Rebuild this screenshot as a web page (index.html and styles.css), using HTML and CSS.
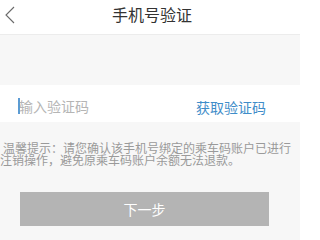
FILE: index.html
```html
<!DOCTYPE html>
<html lang="zh-CN">
<head>
<meta charset="utf-8">
<link rel="stylesheet" href="styles.css">
</head>
<body>
<div class="page">
  <header class="nav">
    <span class="back">
      <svg width="10" height="18" viewBox="0 0 10 18"><path d="M9 1 L1 9 L9 17" fill="none" stroke="#6a6a6a" stroke-width="1.1"/></svg>
    </span>
    <h1 class="title">手机号验证</h1>
    <span class="spacer"></span>
  </header>
  <div class="band"></div>
  <div class="input-row">
    <span class="field"><span class="cursor"></span><span class="placeholder">输入验证码</span></span>
    <span class="get-code">获取验证码</span>
  </div>
  <p class="hint">温馨提示：请您确认该手机号绑定的乘车码账户已进行注销操作，避免原乘车码账户余额无法退款。</p>
  <button class="next">下一步</button>
</div>
</body>
</html>
```
FILE: styles.css
```css
html, body {
  margin: 0;
  padding: 0;
  background: #ffffff;
}
body {
  font-family: "Noto Sans CJK SC", "Noto Sans", sans-serif;
}
.page {
  width: 300px;
  min-height: 240px;
  background: #f7f7f7;
  overflow: hidden;
}
.nav {
  height: 34px;
  background: #ffffff;
  border-bottom: 1px solid #ececec;
  display: flex;
  align-items: center;
  padding-right: 10px;
}
.back {
  width: 24px;
  display: flex;
  justify-content: flex-start;
  padding-left: 5px;
  box-sizing: border-box;
  margin-top: -4px;
}
.back svg { display: block; }
.title {
  flex: 1;
  margin: 0;
  text-align: center;
  font-size: 16px;
  font-weight: normal;
  color: #333333;
  margin-top: -6px;
  margin-right: -14px;
}
.spacer { width: 24px; }
.band {
  height: 50px;
}
.input-row {
  height: 37px;
  box-sizing: border-box;
  background: #ffffff;
  display: flex;
  align-items: center;
  justify-content: space-between;
  padding: 5px 34px 0 18px;
  font-size: 14px;
}
.field {
  display: flex;
  align-items: center;
}
.cursor {
  width: 2px;
  height: 16px;
  background: #5b9bd5;
  margin-right: -1px;
}
.placeholder {
  color: #b5b5b5;
}
.get-code {
  color: #3f8dc9;
  margin-top: 2px;
}
.hint {
  margin: 20px 0 0 0;
  width: 300px;
  text-indent: 3px;
  font-size: 12px;
  line-height: 12px;
  color: #9a9a9a;
}
.next {
  display: block;
  margin: 26px 0 0 20px;
  width: 249px;
  height: 34px;
  border: none;
  background: #b4b4b4;
  color: #ffffff;
  font-family: "Noto Sans CJK SC", "Noto Sans", sans-serif;
  font-size: 14px;
  padding: 0;
}
```
